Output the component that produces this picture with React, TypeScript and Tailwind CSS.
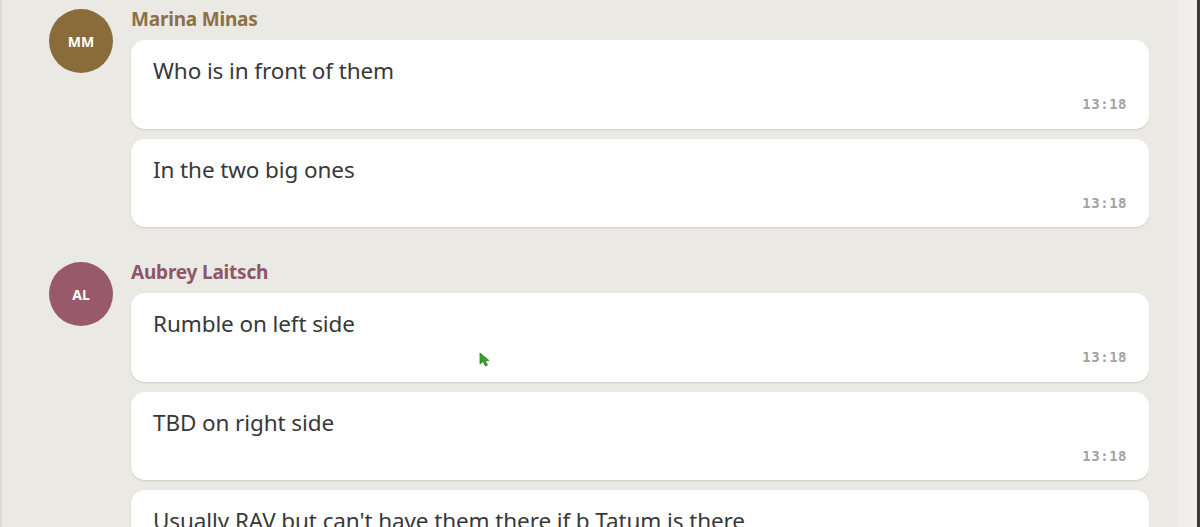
import React from "react";

type Message = { text: string; time: string };
type Group = {
  name: string;
  initials: string;
  avatarColor: string;
  nameColor: string;
  messages: Message[];
};

const groups: Group[] = [
  {
    name: "Marina Minas",
    initials: "MM",
    avatarColor: "bg-[#8a6c3b]",
    nameColor: "text-[#8a7148]",
    messages: [
      { text: "Who is in front of them", time: "13:18" },
      { text: "In the two big ones", time: "13:18" },
    ],
  },
  {
    name: "Aubrey Laitsch",
    initials: "AL",
    avatarColor: "bg-[#98596a]",
    nameColor: "text-[#8e5668]",
    messages: [
      { text: "Rumble on left side", time: "13:18" },
      { text: "TBD on right side", time: "13:18" },
      { text: "Usually RAV but can't have them there if b Tatum is there", time: "13:18" },
    ],
  },
];

export default function App() {
  return (
    <div
      className="relative h-[527px] w-[1200px] overflow-hidden bg-[#ebe9e4] flex"
      style={{ fontFamily: '"Noto Sans", "Open Sans", sans-serif' }}
    >
      <div className="w-[2px] bg-[#dcdad5]" />
      <div className="flex-1 flex flex-col gap-[30px] pl-[47px] pt-[4px]">
        {groups.map((g) => (
          <ChatGroup key={g.name} group={g} />
        ))}
      </div>
      {/* scroll track on the right */}
      <div className="w-[28px] bg-[#ebe9e4]" />
      <div className="w-[20px] bg-[#efeeea]" />
      <div className="w-[3px] bg-[#3b3b3b]" />

      {/* mouse pointer */}
      <svg
        className="absolute left-[479px] top-[352px]"
        width="11"
        height="15"
        viewBox="0 0 11 15"
      >
        <path d="M1 1 L1 12 L4 9.5 L6.5 14 L8.5 13 L6 8.5 L10 8.5 Z" fill="#3aa12e" stroke="#2f7d25" strokeWidth="0.8" />
      </svg>
    </div>
  );
}

function ChatGroup({ group }: { group: Group }) {
  return (
    <div className="flex items-start">
      <div
        className={`mt-[5px] w-[64px] h-[64px] rounded-full ${group.avatarColor} flex items-center justify-center text-white text-[14px] font-bold shrink-0`}
      >
        {group.initials}
      </div>
      <div className="ml-[18px] flex-1 flex flex-col">
        <div className={`h-[36px] leading-[30px] text-[19px] font-bold tracking-[-0.2px] ${group.nameColor}`}>
          {group.name}
        </div>
        <div className="flex flex-col gap-[10px]">
          {group.messages.map((m, i) => (
            <div
              key={i}
              className="h-[88.5px] rounded-[14px] bg-white shadow-[0_1px_2px_rgba(0,0,0,0.12)] px-[22px] pt-[16px] flex flex-col"
            >
              <div className="text-[22.5px] leading-[30px] text-[#383838] tracking-[-0.1px]">{m.text}</div>
              <div
                className="mt-[10px] self-end text-[14px] leading-[16px] font-bold text-[#a3a3a3] tracking-[0.5px]"
                style={{ fontFamily: '"DejaVu Sans Mono", monospace' }}
              >
                {m.time}
              </div>
            </div>
          ))}
        </div>
      </div>
    </div>
  );
}
